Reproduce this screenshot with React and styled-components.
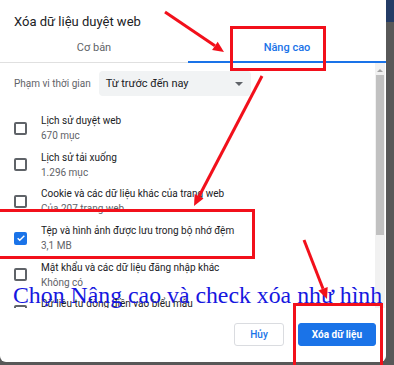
import React from 'react'
import styled, {createGlobalStyle} from 'styled-components'

const GlobalStyle = createGlobalStyle`
    html, body {
        margin: 0;
        padding: 0;
        background: #555;
    }
    * { box-sizing: border-box; }
`;

const Page = styled.div`
    position: relative;
    width: 394px;
    height: 365px;
    overflow: hidden;
    background: linear-gradient(to bottom, #243c66 0 22px, #585858 22px);
    font-family: Roboto, "Noto Sans", sans-serif;
`;

const Dialog = styled.div`
    width: 386px;
    height: 362px;
    background: #fff;
    border-radius: 0 0 6px 6px;
    display: flex;
    flex-direction: column;
`;

const Title = styled.div`
    padding: 14px 0 0 14px;
    height: 33px;
    font-size: 13px;
    color: #202124;
`;

const Tabs = styled.div`
    display: grid;
    grid-template-columns: 188px 1fr;
    border-bottom: 1px solid #e0e0e0;
`;

const Tab = styled.div`
    height: 30px;
    display: flex;
    align-items: center;
    justify-content: center;
    font-size: 11px;
    font-weight: ${p => p.active ? 500 : 400};
    color: ${p => p.active ? '#1a73e8' : '#5f6368'};
    border-bottom: 2px solid ${p => p.active ? '#1a73e8' : 'transparent'};
    margin-bottom: -1px;
`;

const Body = styled.div`
    display: flex;
    height: 245px;
    overflow: hidden;
`;

const Content = styled.div`
    flex: 1;
    padding: 8px 0 0 14px;
`;

const RangeRow = styled.div`
    display: flex;
    align-items: center;
    gap: 8px;
    font-size: 10px;
    color: #5f6368;
    margin-bottom: 14px;
`;

const Select = styled.div`
    width: 152px;
    height: 25px;
    background: #f1f3f4;
    border-radius: 4px;
    display: flex;
    align-items: center;
    justify-content: space-between;
    padding: 0 8px 0 7px;
    font-size: 11px;
    color: #202124;
`;

const Caret = styled.span`
    width: 0;
    height: 0;
    border-left: 4px solid transparent;
    border-right: 4px solid transparent;
    border-top: 4px solid #5f6368;
`;

const Item = styled.div`
    display: flex;
    align-items: center;
    height: 36.6px;
    gap: 14px;
`;

const Box = styled.div`
    width: 13px;
    height: 13px;
    flex: none;
    border-radius: 2px;
    border: ${p => p.checked ? 'none' : '2px solid #5f6368'};
    background: ${p => p.checked ? '#1a73e8' : '#fff'};
    display: flex;
    align-items: center;
    justify-content: center;
`;

const Label = styled.div`
    font-size: 10px;
    line-height: 15px;
    color: #202124;
`;

const Sub = styled.div`
    min-height: 15px;
    color: #5f6368;
`;

const Scrollbar = styled.div`
    width: 10px;
    margin-right: 1px;
    background: #f1f1f1;
    display: flex;
    flex-direction: column;
    align-items: center;
`;

const Arrow = styled.span`
    margin-top: 6px;
    width: 0;
    height: 0;
    border-left: 3px solid transparent;
    border-right: 3px solid transparent;
    border-bottom: 3px solid #a3a3a3;
`;

const Thumb = styled.div`
    width: 8px;
    height: 160px;
    margin-top: 3px;
    background: #c1c1c1;
`;

const Footer = styled.div`
    flex: 1;
    display: flex;
    justify-content: flex-end;
    align-items: center;
    gap: 14px;
    padding: 0 10px 2px 0;
`;

const Button = styled.div`
    height: 23px;
    padding: 0 ${p => p.primary ? 13 : 15}px;
    display: flex;
    align-items: center;
    border-radius: 3px;
    font-size: 10px;
    font-weight: ${p => p.primary ? 700 : 500};
    color: ${p => p.primary ? '#fff' : '#1a73e8'};
    background: ${p => p.primary ? '#1a73e8' : '#fff'};
    border: 1px solid ${p => p.primary ? '#1a73e8' : '#dadce0'};
`;

const Mark = styled.div`
    position: absolute;
    border: 3px solid #f2101b;
`;

const Caption = styled.div`
    position: absolute;
    left: 13px;
    top: 282px;
    font-family: "Liberation Serif", "DejaVu Serif", serif;
    font-size: 23.8px;
    color: #1717e0;
    white-space: nowrap;
`;

const Overlay = styled.svg`
    position: absolute;
    left: 0;
    top: 0;
`;

const items = [
    {name: 'Lịch sử duyệt web', sub: '670 mục'},
    {name: 'Lịch sử tải xuống', sub: '1.296 mục'},
    {name: 'Cookie và các dữ liệu khác của trang web', sub: 'Của 207 trang web'},
    {name: 'Tệp và hình ảnh được lưu trong bộ nhớ đệm', sub: '3,1 MB', checked: true},
    {name: 'Mật khẩu và các dữ liệu đăng nhập khác', sub: 'Không có'},
    {name: 'Dữ liệu tự động điền vào biểu mẫu', sub: ''},
];

const arrows = [
    [165, 12, 224, 52],
    [262, 76, 194, 206],
    [304, 240, 327, 299],
];

function RedArrow({x1, y1, x2, y2}) {
    const a = Math.atan2(y2 - y1, x2 - x1);
    const l = 11, w = 5;
    const bx = x2 - l * Math.cos(a), by = y2 - l * Math.sin(a);
    const px = -Math.sin(a) * w, py = Math.cos(a) * w;
    return (
        <g>
            <line x1={x1} y1={y1} x2={bx} y2={by} stroke="#f2101b" strokeWidth="3" />
            <polygon points={`${x2},${y2} ${bx + px},${by + py} ${bx - px},${by - py}`} fill="#f2101b" />
        </g>
    );
}

export default function App() {
    return (
        <Page>
            <GlobalStyle />
            <Dialog>
                <Title>Xóa dữ liệu duyệt web</Title>
                <Tabs>
                    <Tab>Cơ bản</Tab>
                    <Tab active>Nâng cao</Tab>
                </Tabs>
                <Body>
                    <Content>
                        <RangeRow>
                            Phạm vi thời gian
                            <Select>Từ trước đến nay<Caret /></Select>
                        </RangeRow>
                        {items.map(it => (
                            <Item key={it.name}>
                                <Box checked={it.checked}>
                                    {it.checked && (
                                        <svg width="10" height="10" viewBox="0 0 24 24">
                                            <path d="M4 12.5l5 5L20 6.5" fill="none" stroke="#fff" strokeWidth="3.4" />
                                        </svg>
                                    )}
                                </Box>
                                <Label>
                                    {it.name}
                                    <Sub>{it.sub}</Sub>
                                </Label>
                            </Item>
                        ))}
                    </Content>
                    <Scrollbar>
                        <Arrow />
                        <Thumb />
                    </Scrollbar>
                </Body>
                <Footer>
                    <Button>Hủy</Button>
                    <Button primary>Xóa dữ liệu</Button>
                </Footer>
            </Dialog>

            <Mark style={{left: 230, top: 26, width: 96, height: 45}} />
            <Mark style={{left: -3, top: 209, width: 258, height: 50}} />
            <Mark style={{left: 293, top: 303, width: 90, height: 65}} />

            <Caption>Chọn Nâng cao và check xóa như hình</Caption>

            <Overlay width="394" height="365">
                {arrows.map(([x1, y1, x2, y2], i) => (
                    <RedArrow key={i} x1={x1} y1={y1} x2={x2} y2={y2} />
                ))}
            </Overlay>
        </Page>
    );
}
